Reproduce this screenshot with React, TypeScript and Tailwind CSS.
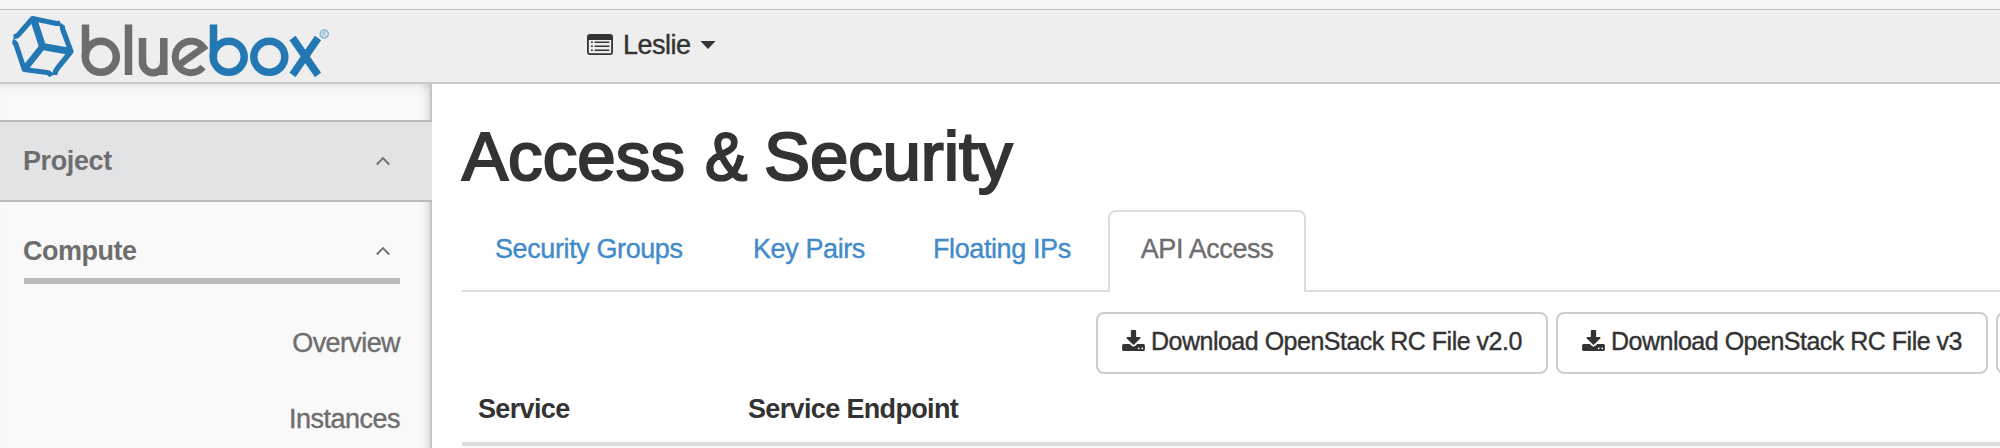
import React from "react";

function DownloadIcon() {
  return (
    <svg viewBox="0 0 1664 1536" className="h-[21px] w-[23px] shrink-0 fill-[#333]">
      <path d="M1280 1344q0-26-19-45t-45-19-45 19-19 45 19 45 45 19 45-19 19-45zM1536 1344q0-26-19-45t-45-19-45 19-19 45 19 45 45 19 45-19 19-45zM1664 1120v320q0 40-28 68t-68 28h-1472q-40 0-68-28t-28-68v-320q0-40 28-68t68-28h465l135 136q58 56 136 56t136-56l136-136h464q40 0 68 28t28 68zM1339 551q17 41-14 70l-448 448q-18 19-45 19t-45-19l-448-448q-31-29-14-70 17-39 59-39h256v-448q0-26 19-45t45-19h256q26 0 45 19t19 45v448h256q42 0 59 39z" />
    </svg>
  );
}

function ListIcon() {
  return (
    <svg viewBox="0 0 26 21" className="h-[21px] w-[26px] shrink-0 fill-[#333]">
      <path fillRule="evenodd" d="M3 0H23Q26 0 26 3V18Q26 21 23 21H3Q0 21 0 18V3Q0 0 3 0ZM1.800 6V18.600Q1.800 19.300 2.500 19.300H23.500Q24.200 19.300 24.200 18.600V6Z" />
      <path d="M4 7.400h1.800v1.600H4zM4 11.400h1.800v1.600H4zM4 15.400h1.800v1.600H4zM7.600 7.400h14.800v1.600H7.600zM7.600 11.400h14.800v1.600H7.600zM7.600 15.400h14.800v1.600H7.600z" />
    </svg>
  );
}

function Chevron() {
  return (
    <svg viewBox="0 0 14 9" className="mr-2.5 h-[9px] w-[14px] shrink-0 fill-none stroke-[#6e6e6e] stroke-[1.8]">
      <path d="M0.800 7.500L7 1.100L13.200 7.500" />
    </svg>
  );
}

function Logo() {
  return (
    <svg viewBox="0 0 318 62" className="ml-3 mt-[5px] h-[62px] w-[318px] shrink-0" fill="none">
      <g stroke="#2378b4" strokeWidth="5.200" strokeLinejoin="round">
        <path d="M1.500 21.800Q5 21.800 7.500 18.500L20.500 3.500L42 8Q46 9 48.500 8" />
        <path d="M0.500 26.500Q3.500 27 4.500 31L12.300 54.500L35 57.500Q38 58 39.500 61" />
        <path d="M51 9.500Q49.500 11.500 51 15L59 36.500L46 52.500Q43 56 42.500 60" />
      </g>
      <g stroke="#2378b4" strokeWidth="7.200" strokeLinejoin="round">
        <path d="M21.500 4L30.500 31.500L58.500 36.500" />
        <path d="M30.500 31.500L13 53.500" strokeWidth="6.500" />
      </g>
      <g stroke="#6d6d6d" strokeWidth="7.500">
        <path d="M73.500 9.500V42" />
        <circle cx="88.800" cy="41.800" r="15.500" />
        <path d="M116.500 9.500V60" />
        <path d="M130.500 23V47A10.600 10.600 0 0 0 151.800 47M151.800 23V60" />
        <path d="M167.500 49.500L191.500 32.500A15.700 15.700 0 1 0 191 52" strokeWidth="7" />
      </g>
      <g stroke="#2378b4" strokeWidth="7.500">
        <path d="M201.500 9.500V42" />
        <circle cx="216.700" cy="41.800" r="15.500" />
        <circle cx="257.300" cy="41.800" r="15.500" />
        <path d="M280.500 23L306 60M306 23L280.500 60" />
      </g>
      <circle cx="312.300" cy="19" r="3.900" stroke="#8fbad8" strokeWidth="1.800" />
      <path d="M311 21.500V17H313.200L312.500 19L314 21.500" stroke="#8fbad8" />
    </svg>
  );
}

export default function App() {
  return (
    <div className="flex h-[448px] w-[2000px] flex-col overflow-hidden bg-white font-['Liberation_Sans',Arial,sans-serif] text-[27px] leading-[30px] tracking-[-0.5px] text-[#333] [-webkit-text-stroke:0.4px]">
      <div className="h-[10px] shrink-0 border-b border-[#c0c0c0] bg-[#f5f5f5]" />
      <header className="flex h-[74px] shrink-0 border-b-2 border-[#c9c9c9] bg-[#eee]">
        <Logo />
        <div className="ml-[257px] flex h-[68px] items-center">
          <ListIcon />
          <span className="ml-[10px] mt-[2px] w-[77px] tracking-[-0.5px]">Leslie</span>
          <svg viewBox="0 0 16 8" className="mt-0.5 h-2 w-4 fill-[#333]">
            <path d="M0.500 0h15L8 8z" />
          </svg>
        </div>
      </header>
      <div className="flex min-h-0 flex-1">
        <aside className="flex w-[432px] shrink-0 flex-col overflow-hidden bg-[#f9f9f9] text-[#6e6e6e] shadow-[inset_-2px_0_0_#c4c4c4,inset_-15px_0_10px_-11px_rgba(0,0,0,0.16),inset_0_8px_8px_-6px_rgba(0,0,0,0.1)]">
          <div className="mt-9 flex h-[82px] shrink-0 items-center justify-between border-y-2 border-[#bababa] bg-[#e2e3e5] pl-[23px] pr-8 font-bold tracking-[-0.4px] [-webkit-text-stroke:0px]">
            <span>Project</span>
            <Chevron />
          </div>
          <div className="ml-6 mt-7 flex h-[54px] w-[376px] shrink-0 items-start justify-between border-b-[6px] border-[#bababa] pt-[6px] font-bold [-webkit-text-stroke:0px]">
            <span className="-ml-px">Compute</span>
            <div className="flex h-[30px] items-center"><Chevron /></div>
          </div>
          <div className="mr-8 mt-11 text-right tracking-[-0.6px]">Overview</div>
          <div className="mr-8 mt-[46px] text-right">Instances</div>
        </aside>
        <main className="flex min-w-0 flex-1 flex-col pl-[30px]">
          <h1 className="mt-[35px] flex whitespace-nowrap text-[69px] leading-[76px] tracking-[-0.1px] [-webkit-text-stroke:2.2px_#333]">
            <span className="w-[243px] tracking-[0.1px]">Access</span>
            <span className="w-[59px] origin-left scale-x-[0.92]">&amp;</span>
            <span>Security</span>
          </h1>
          <nav className="mt-[15px] flex h-[82px] shrink-0 items-stretch whitespace-nowrap tracking-[-0.4px]">
            <div className="flex w-[646px] items-stretch border-b-2 border-[#ddd] pl-[33px] pt-[24px] text-[#428bca]">
              <a className="w-[258px]">Security Groups</a>
              <a className="w-[180px]">Key Pairs</a>
              <a>Floating IPs</a>
            </div>
            <div className="w-[198px] rounded-t-[8px] border-2 border-b-0 border-[#ddd] pt-[22px] text-center tracking-[-0.4px] text-[#6e6e6e]">API Access</div>
            <div className="flex-1 border-b-2 border-[#ddd]" />
          </nav>
          <div className="ml-[634px] mt-5 flex shrink-0 gap-2 overflow-hidden whitespace-nowrap text-[25px] tracking-[-0.5px]">
            <button className="flex h-[62px] w-[452px] shrink-0 items-center rounded-[8px] border-2 border-[#ccc] pb-1.5 pl-6">
              <DownloadIcon />
              <span className="ml-1.5 mt-px">Download OpenStack RC File v2.0</span>
            </button>
            <button className="flex h-[62px] w-[432px] shrink-0 items-center rounded-[8px] border-2 border-[#ccc] pb-1.5 pl-6">
              <DownloadIcon />
              <span className="ml-1.5 mt-px">Download OpenStack RC File v3</span>
            </button>
            <button className="h-[62px] w-[432px] shrink-0 rounded-[8px] border-2 border-[#ccc]" />
          </div>
          <div className="flex h-[72px] shrink-0 border-b-4 border-[#ddd] pl-4 pt-5 font-bold tracking-[-0.65px] [-webkit-text-stroke:0px]">
            <span className="w-[270px]">Service</span>
            <span>Service Endpoint</span>
          </div>
          <div className="h-[2px] bg-[#f9f9f9]" />
        </main>
      </div>
    </div>
  );
}
